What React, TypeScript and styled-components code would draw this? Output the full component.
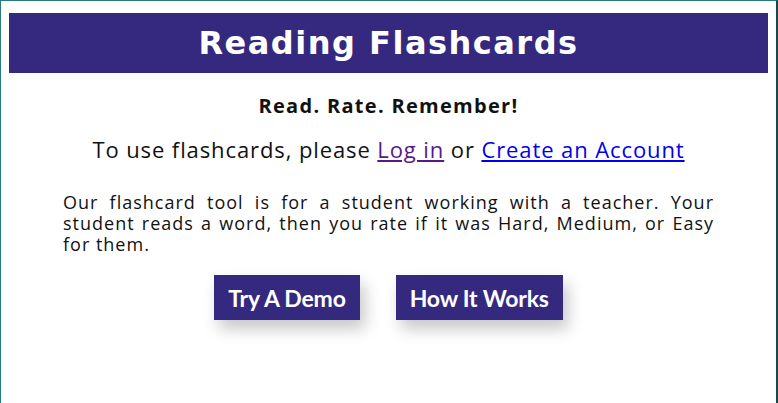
import React from "react";
import styled, { createGlobalStyle } from "styled-components";

const GlobalStyle = createGlobalStyle`
  html, body {
    margin: 0;
    padding: 0;
    background: #ffffff;
  }
  body {
    font-family: "Open Sans", "Noto Sans", sans-serif;
    color: #111111;
  }
`;

const Frame = styled.div`
  box-sizing: border-box;
  min-height: 100vh;
  border-top: 1px solid #267b7c;
  border-left: 1px solid #267b7c;
  border-right: 2px solid #17494a;
  padding: 12px 8px 0 8px;
`;

const Header = styled.header`
  height: 60px;
  background: #35297f;
  display: flex;
  align-items: center;
  justify-content: center;
`;

const Title = styled.h1`
  margin: 0;
  color: #ffffff;
  font-family: "DejaVu Sans", "Open Sans", sans-serif;
  font-weight: 700;
  font-size: 32px;
  letter-spacing: 1.5px;
`;

const Main = styled.main`
  display: flex;
  flex-direction: column;
  align-items: center;
`;

const Tagline = styled.h2`
  margin: 20px 0 0;
  font-size: 20px;
  font-weight: 700;
  line-height: 26px;
  letter-spacing: 1.3px;
`;

const Prompt = styled.p`
  margin: 15px 0 0;
  font-size: 22px;
  line-height: 30px;
  letter-spacing: 0.9px;
`;

const Link = styled.a<{ $visited?: boolean }>`
  color: ${({ $visited }) => ($visited ? "#551a8b" : "#0000ee")};
  text-decoration: underline;
`;

const Blurb = styled.p`
  box-sizing: border-box;
  width: 100%;
  margin: 28px 0 0;
  padding: 0 54px;
  font-size: 18px;
  line-height: 21px;
  letter-spacing: 1px;
  text-align: justify;
`;

const Buttons = styled.div`
  display: flex;
  gap: 36px;
  margin-top: 20px;
`;

const Button = styled.button`
  height: 45px;
  padding: 0 14px;
  border: none;
  background: #35297f;
  color: #ffffff;
  font-family: Lato, "Noto Sans", sans-serif;
  font-weight: 700;
  font-size: 23px;
  letter-spacing: -0.2px;
  box-shadow: 5px 9px 16px rgba(0, 0, 0, 0.22);
  cursor: pointer;
`;

const App = () => {
  return (
    <>
      <GlobalStyle />
      <Frame>
        <Header>
          <Title>Reading Flashcards</Title>
        </Header>
        <Main>
          <Tagline>Read. Rate. Remember!</Tagline>
          <Prompt>
            To use flashcards, please <Link href="#" $visited>Log in</Link> or{" "}
            <Link href="#">Create an Account</Link>
          </Prompt>
          <Blurb>
            Our flashcard tool is for a student working with a teacher. Your
            student reads a word, then you rate if it was Hard, Medium, or Easy
            for them.
          </Blurb>
          <Buttons>
            <Button>Try A Demo</Button>
            <Button>How It Works</Button>
          </Buttons>
        </Main>
      </Frame>
    </>
  );
};

export default App;
